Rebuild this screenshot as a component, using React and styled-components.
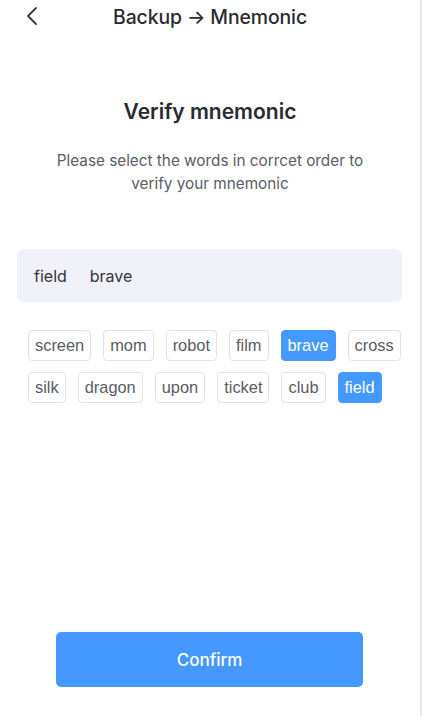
import React, { useState } from 'react';
import styled, { createGlobalStyle } from 'styled-components';

const GlobalStyle = createGlobalStyle`
  html, body {
    margin: 0;
    padding: 0;
    background: #fff;
  }
  body {
    font-family: Inter, "Noto Sans", "Liberation Sans", sans-serif;
    -webkit-font-smoothing: antialiased;
  }
`;

const Screen = styled.div`
  width: 420px;
  height: 716px;
  border-right: 2px solid #e6e7eb;
  display: flex;
  flex-direction: column;
  background: #fff;
  box-sizing: content-box;
`;

const Header = styled.div`
  height: 33px;
  display: flex;
  align-items: center;
  position: relative;
  justify-content: center;
`;

const BackButton = styled.button`
  position: absolute;
  left: 20px;
  top: 4px;
  width: 24px;
  height: 24px;
  padding: 0;
  border: none;
  background: none;
  display: flex;
  align-items: center;
  justify-content: center;
  color: #3a3b40;
`;

const Title = styled.div`
  font-size: 19.4px;
  font-weight: 500;
  color: #2a2b30;
  letter-spacing: -0.1px;
`;

const Heading = styled.h1`
  margin: 65px 0 0;
  text-align: center;
  font-size: 21px;
  font-weight: 600;
  color: #2a2b30;
  line-height: 28px;
`;

const Subtitle = styled.p`
  margin: 23px auto 0;
  width: 330px;
  text-align: center;
  font-size: 15.3px;
  line-height: 23px;
  color: #5a5d66;
`;

const Picked = styled.div`
  margin: 54px 18px 0 17px;
  height: 53px;
  border-radius: 7px;
  background: #f1f2f9;
  display: flex;
  align-items: center;
  gap: 23px;
  padding: 0 17px;
  box-sizing: border-box;
`;

const PickedWord = styled.span`
  font-size: 16px;
  color: #34353a;
`;

const Chips = styled.div`
  margin-top: 28px;
  padding: 0 12px 0 28px;
  display: flex;
  flex-wrap: wrap;
  column-gap: 12px;
  row-gap: 11px;
`;

const Chip = styled.button`
  height: 31px;
  padding: 0 6px;
  border-radius: 4px;
  border: 1px solid ${({ active }) => (active ? '#4499ff' : '#dfe2e7')};
  background: ${({ active }) => (active ? '#4499ff' : '#fff')};
  color: ${({ active }) => (active ? '#fff' : '#5a5c63')};
  font-family: "Liberation Sans", Arial, sans-serif;
  font-size: 16.4px;
  line-height: 29px;
  cursor: pointer;
`;

const Spacer = styled.div`
  flex: 1;
`;

const ConfirmButton = styled.button`
  margin: 0 0 29px 56px;
  width: 307px;
  height: 55px;
  border: none;
  border-radius: 5px;
  background: #4598fe;
  color: #fff;
  font-family: inherit;
  font-size: 17px;
  font-weight: 500;
`;

const words = ['screen', 'mom', 'robot', 'film', 'brave', 'cross', 'silk', 'dragon', 'upon', 'ticket', 'club', 'field'];

export default function App() {
  const [picked, setPicked] = useState(['field', 'brave']);

  const toggle = (w) =>
    setPicked((p) => (p.includes(w) ? p.filter((x) => x !== w) : [...p, w]));

  return (
    <>
      <GlobalStyle />
      <Screen>
        <Header>
          <BackButton aria-label="back">
            <svg width="14" height="20" viewBox="0 0 14 20" fill="none">
              <path d="M11 2 L3 10 L11 18" stroke="currentColor" strokeWidth="1.8" strokeLinecap="round" strokeLinejoin="round" />
            </svg>
          </BackButton>
          <Title>Backup → Mnemonic</Title>
        </Header>
        <Heading>Verify mnemonic</Heading>
        <Subtitle>Please select the words in corrcet order to verify your mnemonic</Subtitle>
        <Picked>
          {picked.map((w) => (
            <PickedWord key={w}>{w}</PickedWord>
          ))}
        </Picked>
        <Chips>
          {words.map((w) => (
            <Chip key={w} active={picked.includes(w)} onClick={() => toggle(w)}>
              {w}
            </Chip>
          ))}
        </Chips>
        <Spacer />
        <ConfirmButton>Confirm</ConfirmButton>
      </Screen>
    </>
  );
}
